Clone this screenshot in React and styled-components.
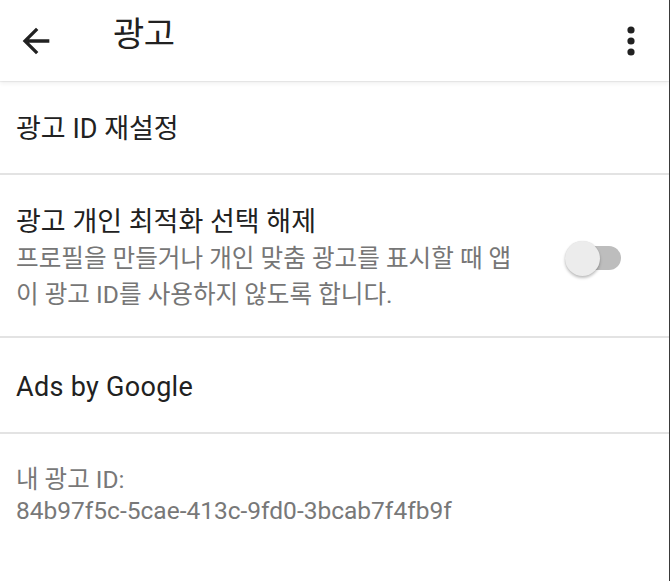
import React, { useState } from "react";
import styled, { createGlobalStyle } from "styled-components";

const Global = createGlobalStyle`
  html, body { margin: 0; padding: 0; background: #ffffff; }
  body { font-family: "Roboto", "Noto Sans CJK KR", sans-serif; }
  * { box-sizing: border-box; }
`;

const Screen = styled.div`
  width: 670px;
  height: 581px;
  background: #ffffff;
  border-right: 1px solid #3a3a3a;
  display: flex;
  flex-direction: column;
  overflow: hidden;
`;

const AppBar = styled.header`
  height: 81px;
  flex: none;
  display: flex;
  align-items: center;
  padding: 0 28px 0 16px;
  background: #ffffff;
  position: relative;
  z-index: 1;
  box-shadow: 0 1px 1px rgba(0, 0, 0, 0.06), 0 3px 4px rgba(0, 0, 0, 0.05);
`;

const IconButton = styled.button`
  border: 0;
  background: none;
  padding: 0;
  width: ${(p) => p.$w || 40}px;
  height: 40px;
  display: flex;
  align-items: center;
  justify-content: center;
  color: #212121;
`;

const Title = styled.h1`
  margin: 0 0 0 57px;
  flex: 1;
  font-family: "Roboto", "Noto Sans CJK KR", sans-serif;
  font-weight: 400;
  font-size: 34px;
  letter-spacing: -0.5px;
  color: #212121;
  line-height: 1;
  padding-bottom: 14px;
`;

const List = styled.div`
  display: flex;
  flex-direction: column;
`;

const Row = styled.div`
  display: flex;
  align-items: ${(p) => p.$align || "center"};
  min-height: ${(p) => p.$h}px;
  padding: ${(p) => p.$pad || "0 16px"};
  border-bottom: ${(p) => (p.$last ? "none" : "2px solid #e3e3e3")};
`;

const RowText = styled.div`
  flex: 1;
  display: flex;
  flex-direction: column;
`;

const RowTitle = styled.div`
  font-size: 27px;
  letter-spacing: ${(p) => p.$ls || "0"};
  line-height: 38px;
  color: #212121;
`;

const RowSub = styled.div`
  font-size: 24.6px;
  letter-spacing: 0;
  line-height: 36px;
  color: #767676;
  width: 512px;
`;

const IdText = styled.div`
  font-size: 24.5px;
  letter-spacing: 0;
  line-height: 31px;
  color: #787878;
`;

const Switch = styled.div`
  position: relative;
  width: 56px;
  height: 36px;
  margin-right: 32px;
  flex: none;
`;

const Track = styled.div`
  position: absolute;
  left: 4px;
  right: 0;
  top: 6px;
  height: 24px;
  border-radius: 12px;
  background: #bdbdbd;
`;

const Thumb = styled.div`
  position: absolute;
  left: 0;
  top: 1px;
  width: 35px;
  height: 35px;
  border-radius: 50%;
  background: #ececec;
  box-shadow: 0 2px 3px rgba(0, 0, 0, 0.25), 0 0 1px rgba(0, 0, 0, 0.12);
`;

export default function App() {
  const [on] = useState(false);
  return (
    <>
      <Global />
      <Screen>
        <AppBar>
          <IconButton aria-label="back">
            <svg width="40" height="40" viewBox="0 0 24 24" fill="#212121">
              <path d="M20 11H7.83l5.59-5.59L12 4l-8 8 8 8 1.41-1.41L7.83 13H20v-2z" />
            </svg>
          </IconButton>
          <Title>광고</Title>
          <IconButton $w={20} aria-label="more">
            <svg width="10" height="40" viewBox="0 0 10 40" fill="#212121">
              <circle cx="5" cy="9" r="3.6" />
              <circle cx="5" cy="20" r="3.6" />
              <circle cx="5" cy="31" r="3.6" />
            </svg>
          </IconButton>
        </AppBar>
        <List>
          <Row $h={94} $pad="4px 16px 0">
            <RowText>
              <RowTitle>광고 ID 재설정</RowTitle>
            </RowText>
          </Row>
          <Row $h={163} $pad="4px 16px 0">
            <RowText>
              <RowTitle>광고 개인 최적화 선택 해제</RowTitle>
              <RowSub>프로필을 만들거나 개인 맞춤 광고를 표시할 때 앱이 광고 ID를 사용하지 않도록 합니다.</RowSub>
            </RowText>
            <Switch aria-checked={on}>
              <Track />
              <Thumb />
            </Switch>
          </Row>
          <Row $h={96} $pad="4px 16px 0">
            <RowText>
              <RowTitle $ls="0.3px">Ads by Google</RowTitle>
            </RowText>
          </Row>
          <Row $h={140} $last $align="flex-start" $pad="30px 16px 0">
            <RowText>
              <IdText>내 광고 ID:</IdText>
              <IdText>84b97f5c-5cae-413c-9fd0-3bcab7f4fb9f</IdText>
            </RowText>
          </Row>
        </List>
      </Screen>
    </>
  );
}
